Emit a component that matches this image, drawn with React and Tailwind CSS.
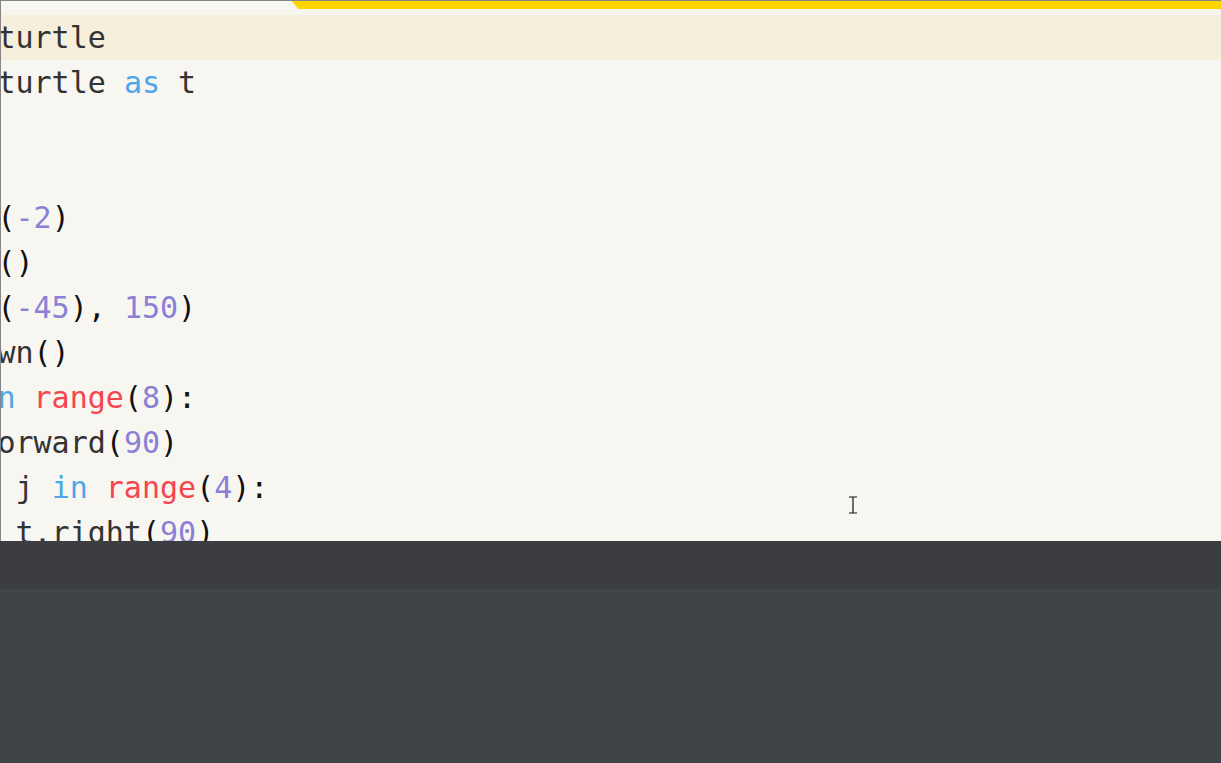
const C = {
  t: "text-[#333333]",
  k: "text-[#4ea5e9]",
  f: "text-[#f5454f]",
  n: "text-[#8a80d6]",
  p: "text-[#111111]",
};

// each line: list of [text, colorKey]
const lines = [
  [["import turtle", "t"]],
  [["import turtle ", "t"], ["as", "k"], [" t", "t"]],
  [],
  [],
  [["t.speed", "t"], ["(", "p"], ["-2", "n"], [")", "p"]],
  [["t.penup", "t"], ["()", "p"]],
  [["t.setpo", "t"], ["(", "p"], ["-45", "n"], ["), ", "p"], ["150", "n"], [")", "p"]],
  [["t.pendown", "t"], ["()", "p"]],
  [["for i ", "t"], ["in", "k"], [" ", "t"], ["range", "f"], ["(", "p"], ["8", "n"], ["):", "p"]],
  [["    t.forward", "t"], ["(", "p"], ["90", "n"], [")", "p"]],
  [["    ", "t"], ["for", "k"], [" j ", "t"], ["in", "k"], [" ", "t"], ["range", "f"], ["(", "p"], ["4", "n"], ["):", "p"]],
  [["        t.right", "t"], ["(", "p"], ["90", "n"], [")", "p"]],
];

const CodeLine = ({ parts, active }) => (
  <div className={`h-[45px] leading-[45px] whitespace-pre ${active ? "bg-[#f6efdc]" : ""}`}>
    <div className="ml-[-130px]">
      {parts.length === 0 ? " " : parts.map(([txt, c], i) => (
        <span key={i} className={C[c]}>{txt}</span>
      ))}
    </div>
  </div>
);

export default function App() {
  return (
    <div className="w-[1221px] h-[763px] flex flex-col overflow-hidden bg-[#f7f6f1]">
      {/* editor */}
      <div className="relative h-[541px] flex flex-col overflow-hidden border-l border-t border-[#858585]">
        <div className="h-[8px] flex shrink-0">
          <div className="w-[291px]" />
          <div className="flex-1 bg-[#ffd500] [clip-path:polygon(0_0,100%_0,100%_100%,6px_100%)]" />
        </div>
        <div className="h-[6px] shrink-0 bg-[#f7f6ee]" />
        <div className="text-[30px] font-['DejaVu_Sans_Mono',monospace] tracking-normal">
          {lines.map((l, i) => (
            <CodeLine key={i} parts={l} active={i === 0} />
          ))}
        </div>
        {/* mouse I-beam cursor */}
        <svg className="absolute left-[847px] top-[495px]" width="10" height="18" viewBox="0 0 10 18" fill="none" stroke="#111" strokeWidth="1.2">
          <path d="M1 1h8M5 1v16M1 17h8" />
        </svg>
      </div>
      {/* bottom panels */}
      <div className="h-[48px] shrink-0 bg-[#3c3d41]" />
      <div className="flex-1 bg-[#404347]" />
    </div>
  );
}
